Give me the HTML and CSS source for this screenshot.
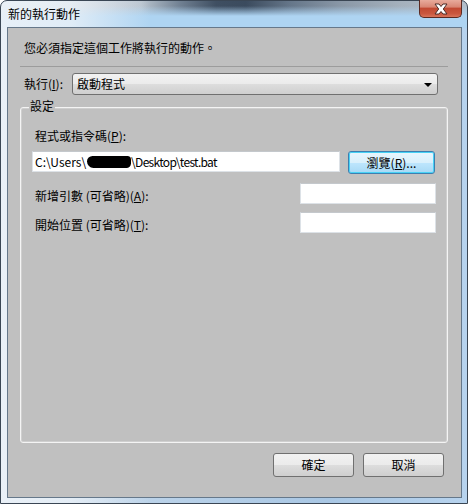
FILE: index.html
```html
<!DOCTYPE html>
<html>
<head>
<meta charset="utf-8">
<link rel="stylesheet" href="styles.css">
</head>
<body>
<div class="window">
  <div class="titlebar">
    <span class="title">新的執行動作</span>
    <div class="close">
      <svg width="16" height="12" viewBox="0 0 16 12"><path d="M2 1 H6 L8 3.5 L10 1 H14 L10.3 6 L14 11 H10 L8 8.5 L6 11 H2 L5.7 6 Z" fill="#fff" stroke="#4a2a26" stroke-width="1" stroke-linejoin="round"/></svg>
    </div>
  </div>
  <div class="client">
    <div class="instr">您必須指定這個工作將執行的動作。</div>
    <div class="sep"></div>
    <div class="runrow">
      <span class="runlabel">執行(<u>I</u>):</span>
      <div class="combo">
        <span>啟動程式</span>
        <span class="arrow"></span>
      </div>
    </div>
    <div class="group">
      <span class="glabel">設定</span>
      <div class="flabel">程式或指令碼(<u>P</u>):</div>
      <div class="pathrow">
        <div class="textbox path">C:\Users\<span class="blot"></span><span class="tail">\Desktop\test.bat</span></div>
        <div class="btn browse">瀏覽(<u>R</u>)...</div>
      </div>
      <div class="optrow first">
        <span class="olabel">新增引數 (可省略)(<u>A</u>):</span>
        <div class="textbox small"></div>
      </div>
      <div class="optrow second">
        <span class="olabel">開始位置 (可省略)(<u>T</u>):</span>
        <div class="textbox small"></div>
      </div>
    </div>
    <div class="buttons">
      <div class="btn action">確定</div>
      <div class="btn action">取消</div>
    </div>
  </div>
</div>
</body>
</html>
```
FILE: styles.css
```css
html, body {
  margin: 0;
  padding: 0;
  background: #ffffff;
}
body {
  font-family: "Noto Sans CJK TC", "Noto Sans", sans-serif;
  font-size: 12px;
  color: #000;
}
u { text-decoration: underline; text-underline-offset: 1px; }

.window {
  width: 468px;
  height: 504px;
  box-sizing: border-box;
  border: 1px solid #3a4654;
  border-radius: 7px 7px 0 0;
  background:
    linear-gradient(90deg, rgba(236,242,248,0.92) 0px, rgba(236,242,248,0.8) 70px, rgba(236,242,248,0) 150px),
    linear-gradient(180deg, rgba(174,212,242,0) 5px, rgba(174,212,242,1) 15px),
    linear-gradient(90deg, #d6dee6 0px, #b8c3ce 140px, #6f7f91 180px, #3f4f62 215px, #3b4b5e 245px, #66778a 290px, #8a98a7 340px, #a5b1bd 400px, #b3bfcb 468px),
    linear-gradient(90deg, #c9dbec 0%, #b7d0e8 40%, #a9c7e4 70%, #b7d3ee 100%);
  background-size: 100% 100%, 100% 27px, 100% 27px, 100% 100%;
  background-repeat: no-repeat;
  display: flex;
  flex-direction: column;
  padding: 0 5px 5px 6px;
}

.titlebar {
  height: 26px;
  display: flex;
  justify-content: space-between;
  align-items: flex-start;
  flex: none;
}
.title {
  align-self: center;
  padding-left: 1px;
  line-height: 16px;
  color: #000;
}
.close {
  margin-top: -1px;
  width: 43px;
  height: 18px;
  box-sizing: border-box;
  border: 1px solid #5b2a22;
  border-top: none;
  border-radius: 0 0 5px 5px;
  background: linear-gradient(180deg, #e8ab9c 0%, #d98775 40%, #c24a33 50%, #c9573f 80%, #d8745a 100%);
  display: flex;
  align-items: center;
  justify-content: center;
}
.close svg { display: block; }

.client {
  flex: 1;
  border: 1px solid #66788a;
  background: #c0c0c0;
  display: flex;
  flex-direction: column;
}

.instr {
  margin: 12px 0 0 16px;
  line-height: 16px;
}
.sep {
  margin: 10px 13px 0 12px;
  border-top: 1px solid #9c9c9c;
}
.runrow {
  margin-top: 6px;
  padding-left: 16px;
  display: flex;
  align-items: center;
}
.runlabel {
  width: 48px;
  line-height: 16px;
}
.combo {
  width: 366px;
  height: 22px;
  box-sizing: border-box;
  border: 1px solid #707070;
  border-radius: 3px;
  background: linear-gradient(180deg, #f2f2f2 0%, #ebebeb 50%, #dddddd 51%, #cfcfcf 100%);
  display: flex;
  align-items: center;
  justify-content: space-between;
  padding: 0 5px 0 4px;
  line-height: 16px;
}
.arrow {
  width: 0;
  height: 0;
  border-left: 4px solid transparent;
  border-right: 4px solid transparent;
  border-top: 4px solid #000;
  margin-top: 1px;
}

.group {
  position: relative;
  flex: 1;
  margin: 12px 13px 0 12px;
  border: 1px solid #f4f4f4;
  border-radius: 3px;
  box-shadow: inset 0 0 0 1px #cfcfcf;
  padding: 0 11px;
}
.glabel {
  position: absolute;
  top: -10px;
  left: 8px;
  padding: 0 1px;
  background: #c0c0c0;
  line-height: 16px;
}
.flabel {
  margin-top: 20px;
  padding-left: 3px;
  line-height: 16px;
}
.pathrow {
  margin-top: 7px;
  display: flex;
  align-items: flex-start;
  gap: 8px;
}
.textbox {
  height: 21px;
  box-sizing: border-box;
  background: #fff;
  border: 1px solid #dde2e7;
  border-top-color: #c4c8cc;
}
.path {
  width: 308px;
  padding-left: 2px;
  line-height: 19px;
  white-space: nowrap;
  display: flex;
  align-items: center;
}
.blot {
  display: inline-block;
  width: 44px;
  height: 12px;
  background: #000;
  border-radius: 6px 4px 5px 7px;
  margin: 0 0 0 1px;
}
.tail {
  letter-spacing: -0.7px;
}
.btn {
  box-sizing: border-box;
  border: 1px solid #707070;
  border-radius: 3px;
  background: linear-gradient(180deg, #f2f2f2 0%, #ebebeb 50%, #dddddd 51%, #cfcfcf 100%);
  display: flex;
  align-items: center;
  justify-content: center;
  line-height: 16px;
}
.browse {
  width: 87px;
  height: 23px;
  border-color: #3c7fb1;
  box-shadow: inset 0 0 0 1px #48d2f5;
  background: linear-gradient(180deg, #eaf6fd 0%, #d9f0fc 50%, #bee6fd 51%, #a7d9f5 100%);
}
.optrow {
  display: flex;
  justify-content: space-between;
  align-items: center;
}
.optrow.first { margin-top: 9px; }
.optrow.second { margin-top: 8px; }
.olabel {
  padding-left: 3px;
  padding-top: 4px;
  line-height: 16px;
}
.small { width: 136px; }

.buttons {
  display: flex;
  justify-content: flex-end;
  gap: 9px;
  margin: 10px 17px 20px 0;
}
.action {
  width: 81px;
  height: 24px;
}
```
